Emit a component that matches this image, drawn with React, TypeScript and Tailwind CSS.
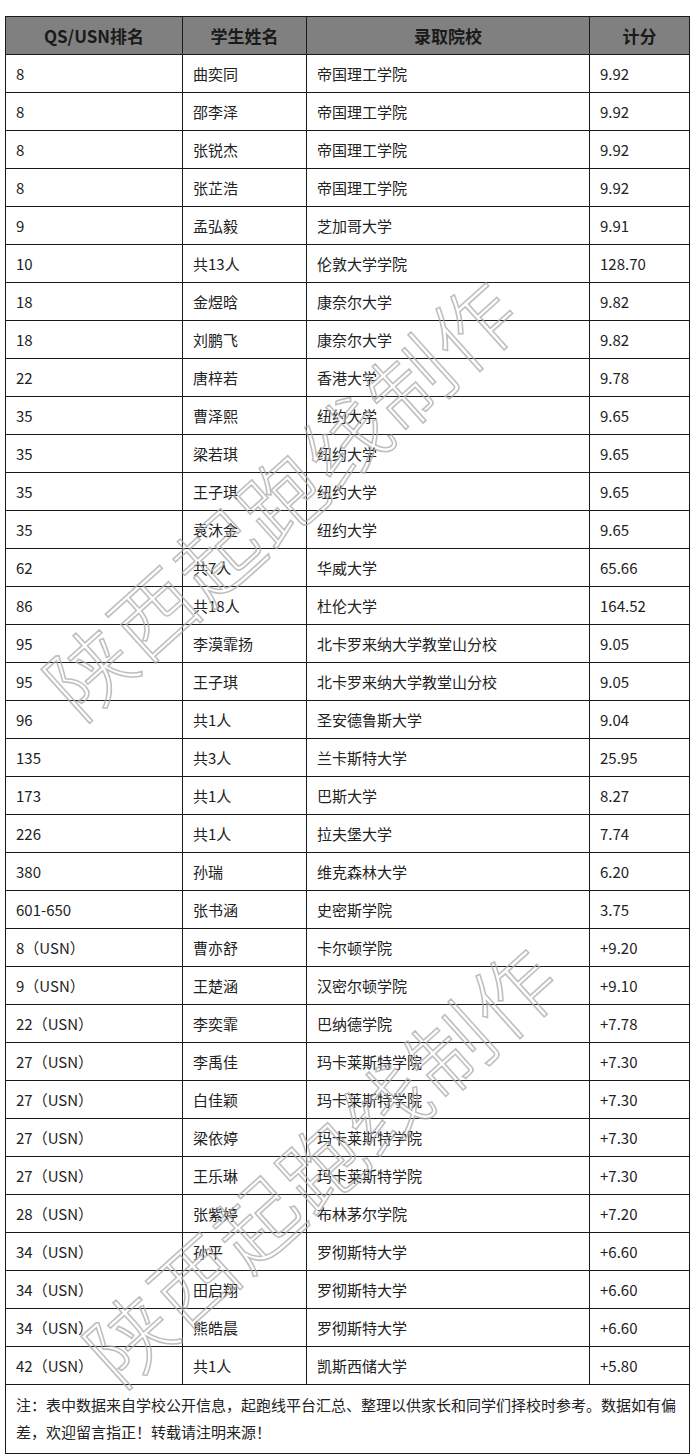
import React from "react";

const rows: [string, string, string, string][] = [
  ["8", "曲奕同", "帝国理工学院", "9.92"],
  ["8", "邵李泽", "帝国理工学院", "9.92"],
  ["8", "张锐杰", "帝国理工学院", "9.92"],
  ["8", "张芷浩", "帝国理工学院", "9.92"],
  ["9", "孟弘毅", "芝加哥大学", "9.91"],
  ["10", "共13人", "伦敦大学学院", "128.70"],
  ["18", "金煜晗", "康奈尔大学", "9.82"],
  ["18", "刘鹏飞", "康奈尔大学", "9.82"],
  ["22", "唐梓若", "香港大学", "9.78"],
  ["35", "曹泽熙", "纽约大学", "9.65"],
  ["35", "梁若琪", "纽约大学", "9.65"],
  ["35", "王子琪", "纽约大学", "9.65"],
  ["35", "袁沐金", "纽约大学", "9.65"],
  ["62", "共7人", "华威大学", "65.66"],
  ["86", "共18人", "杜伦大学", "164.52"],
  ["95", "李漠霏扬", "北卡罗来纳大学教堂山分校", "9.05"],
  ["95", "王子琪", "北卡罗来纳大学教堂山分校", "9.05"],
  ["96", "共1人", "圣安德鲁斯大学", "9.04"],
  ["135", "共3人", "兰卡斯特大学", "25.95"],
  ["173", "共1人", "巴斯大学", "8.27"],
  ["226", "共1人", "拉夫堡大学", "7.74"],
  ["380", "孙瑞", "维克森林大学", "6.20"],
  ["601-650", "张书涵", "史密斯学院", "3.75"],
  ["8（USN）", "曹亦舒", "卡尔顿学院", "+9.20"],
  ["9（USN）", "王楚涵", "汉密尔顿学院", "+9.10"],
  ["22（USN）", "李奕霏", "巴纳德学院", "+7.78"],
  ["27（USN）", "李禹佳", "玛卡莱斯特学院", "+7.30"],
  ["27（USN）", "白佳颖", "玛卡莱斯特学院", "+7.30"],
  ["27（USN）", "梁依婷", "玛卡莱斯特学院", "+7.30"],
  ["27（USN）", "王乐琳", "玛卡莱斯特学院", "+7.30"],
  ["28（USN）", "张紫婷", "布林茅尔学院", "+7.20"],
  ["34（USN）", "孙平", "罗彻斯特大学", "+6.60"],
  ["34（USN）", "田启翔", "罗彻斯特大学", "+6.60"],
  ["34（USN）", "熊皓晨", "罗彻斯特大学", "+6.60"],
  ["42（USN）", "共1人", "凯斯西储大学", "+5.80"],
];

export default function App() {
  return (
    <div
      className="relative w-[698px] h-[1456px] bg-white overflow-hidden"
      style={{ fontFamily: '"Noto Sans CJK SC", "Noto Sans", sans-serif' }}
    >
      <div className="pt-[16px] pl-[5px]">
        <table className="w-[684px] border-collapse table-fixed text-[15px] text-[#222]">
          <colgroup>
            <col className="w-[177px]" />
            <col className="w-[124px]" />
            <col className="w-[283px]" />
            <col className="w-[100px]" />
          </colgroup>
          <thead>
            <tr className="bg-[#808080] h-[38px]">
              {["QS/USN排名", "学生姓名", "录取院校", "计分"].map((h) => (
                <th
                  key={h}
                  className="border border-[#1a1a1a] text-center font-bold text-[17px] text-[#1a1a1a] p-0 leading-none"
                >
                  {h}
                </th>
              ))}
            </tr>
          </thead>
          <tbody>
            {rows.map((r, i) => (
              <tr key={i} className="h-[38px]">
                {r.map((c, j) => (
                  <td
                    key={j}
                    className="border border-[#1a1a1a] pl-[10px] p-0 leading-none whitespace-nowrap"
                  >
                    {c}
                  </td>
                ))}
              </tr>
            ))}
            <tr>
              <td
                colSpan={4}
                className="border border-[#1a1a1a] pl-[10px] pr-[8px] pt-[6px] pb-[8px] leading-[27px] text-[15px]"
              >
                注：表中数据来自学校公开信息，起跑线平台汇总、整理以供家长和同学们择校时参考。数据如有偏差，欢迎留言指正！转载请注明来源！
              </td>
            </tr>
          </tbody>
        </table>
      </div>

      <div
        className="absolute left-[280px] top-[495px] -translate-x-1/2 -translate-y-1/2 -rotate-[42deg] whitespace-nowrap text-[84px] leading-none text-transparent pointer-events-none tracking-[2px]"
        style={{ WebkitTextStroke: "1.6px rgba(170,170,170,0.75)", fontFamily: '"Noto Sans CJK SC", sans-serif', fontWeight: 300 }}
      >
        陕西起跑线制作
      </div>
      <div
        className="absolute left-[320px] top-[1162px] -translate-x-1/2 -translate-y-1/2 -rotate-[42deg] whitespace-nowrap text-[84px] leading-none text-transparent pointer-events-none tracking-[2px]"
        style={{ WebkitTextStroke: "1.6px rgba(170,170,170,0.75)", fontFamily: '"Noto Sans CJK SC", sans-serif', fontWeight: 300 }}
      >
        陕西起跑线制作
      </div>
    </div>
  );
}
